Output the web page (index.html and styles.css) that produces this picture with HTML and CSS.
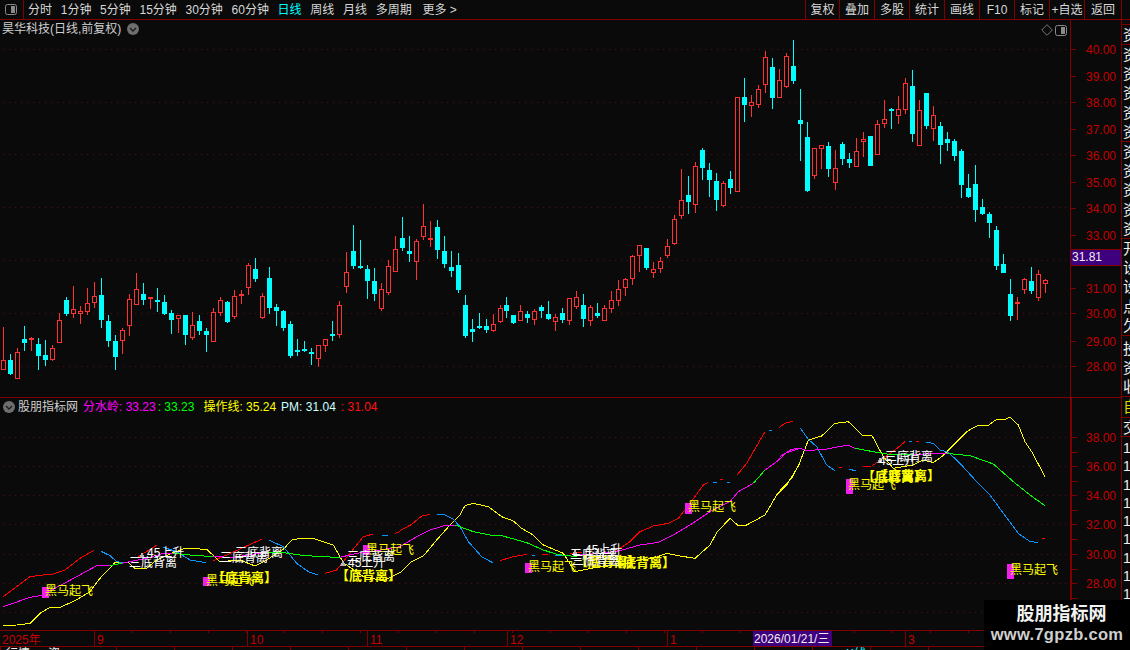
FILE: index.html
```html
<!DOCTYPE html>
<html lang="zh">
<head>
<meta charset="utf-8">
<title>昊华科技</title>
<link rel="stylesheet" href="styles.css">
</head>
<body>
<div class="app">
  <header class="toolbar">
    <div class="toggle"><svg class="panel-icon" viewBox="0 0 12 11"><rect x="0.5" y="0.5" width="11" height="10" rx="2" fill="none" stroke="#8a8a8a"/><rect x="6" y="2" width="4" height="7" fill="#8a8a8a"/></svg></div>
    <nav class="periods">
      <span>分时</span><span>1分钟</span><span>5分钟</span><span>15分钟</span><span>30分钟</span><span>60分钟</span><span class="active">日线</span><span>周线</span><span>月线</span><span>多周期</span><span>更多 &gt;</span>
    </nav>
    <div class="tools">
      <span>复权</span><span>叠加</span><span>多股</span><span>统计</span><span>画线</span><span>F10</span><span>标记</span><span>+自选</span><span>返回</span>
    </div>
  </header>
  <div class="workspace">
    <main class="charts">
      <section class="pane price-pane">
        <div class="plot">
          <svg id="candles" class="chart" viewBox="0 20 1070 377" shape-rendering="crispEdges"></svg>
          <div class="legend title-row">
            <span class="title">昊华科技(日线,前复权)</span>
            <svg class="chev" viewBox="0 0 12 12"><circle cx="6" cy="6" r="6" fill="#6e6e6e"/><path d="M3 5l3 3 3-3" fill="none" stroke="#1c1c1c" stroke-width="1.4"/></svg>
          </div>
          <div class="corner-icons">
            <svg class="diamond" viewBox="0 0 12 12"><path d="M6 .7L11.3 6 6 11.3.7 6z" fill="none" stroke="#777"/></svg>
            <svg class="panel-icon" viewBox="0 0 12 11"><rect x="0.5" y="0.5" width="11" height="10" rx="2" fill="none" stroke="#8a8a8a"/><rect x="6" y="2" width="4" height="7" fill="#8a8a8a"/></svg>
          </div>
        </div>
        <div class="axis" id="price-axis"><span class="last-price">31.81</span></div>
      </section>
      <section class="pane ind-pane">
        <div class="plot">
          <svg id="indicator" class="chart" viewBox="0 398 1070 232" shape-rendering="crispEdges"></svg>
          <div class="legend ind-legend">
            <svg class="chev" viewBox="0 0 12 12"><circle cx="6" cy="6" r="6" fill="#6e6e6e"/><path d="M3 5l3 3 3-3" fill="none" stroke="#1c1c1c" stroke-width="1.4"/></svg>
            <span class="title">股朋指标网</span>
            <span class="magenta">分水岭: 33.23</span>
            <span class="green">: 33.23</span>
            <span class="yellow">操作线: 35.24</span>
            <span class="pale">PM: 31.04</span>
            <span class="red">: 31.04</span>
          </div>
          <div id="signals"></div>
        </div>
        <div class="axis axis-thick" id="ind-axis"></div>
      </section>
      <div class="time-axis" id="time-axis"><span class="date-box">2026/01/21/三</span></div>
      <div class="tabs"><span class="tab-a">行情</span><span class="tab-b">资</span><span class="tab-c">K线</span></div>
    </main>
    <aside class="side">
      <div class="side-gap"></div>
      <div class="side-group one">资</div>
      <div class="side-group">资<br>资<br>资<br>资<br>资</div>
      <div class="side-group">资<br>资<br>资<br>资<br>资</div>
      <div class="side-group">开<br>设<br>设<br>点<br>欠</div>
      <div class="side-group three">投<br>资<br>收</div>
      <div class="side-group auto">自</div>
      <div class="side-group trade">交</div>
      <div class="side-nums"><span>1</span><span>1</span><span>1</span><span>1</span><span>1</span><span>1</span><span>1</span><span>1</span><span>1</span></div>
    </aside>
  </div>
  <div class="watermark"><strong>股朋指标网</strong><em>www.7gpzb.com</em></div>
</div>
<script src="chart.js"></script>
</body>
</html>
```
FILE: styles.css
```css
* { box-sizing: border-box; }
html, body { margin: 0; height: 100%; background: #0a0a0a; overflow: hidden; }
body { font: 12px/1 "Liberation Sans", "Noto Sans CJK SC", sans-serif; color: #d8d8d8; }
.app { position: relative; width: 1130px; height: 650px; display: flex; flex-direction: column; }

.toolbar { height: 20px; flex: none; display: flex; align-items: stretch; border-bottom: 1px solid #800000; padding-right: 8px; }
.toggle { width: 24px; border-right: 1px solid #800000; display: flex; align-items: center; justify-content: center; padding-right: 1px; }
.panel-icon { width: 12px; height: 11px; display: block; }
.periods { display: flex; align-items: center; gap: 8.7px; padding-left: 4px; flex: 1; }
.periods .active { color: #00ffff; }
.periods span:last-child { margin-left: 2px; }
.tools { display: flex; }
.tools span { width: 35px; display: flex; align-items: center; justify-content: center; border-right: 1px solid #800000; }
.tools span:first-child { border-left: 1px solid #800000; }
.tools span:last-child { width: 37px; }

.workspace { flex: 1; display: flex; min-height: 0; }
.charts { width: 1121px; flex: none; display: flex; flex-direction: column; }
.pane { display: flex; }
.price-pane { height: 377px; }
.ind-pane { height: 233px; border-top: 1px solid #800000; }
.plot { position: relative; width: 1070px; flex: none; }
.chart { display: block; width: 1070px; height: 100%; }

.legend { position: absolute; display: flex; align-items: center; white-space: nowrap; }
.title-row { left: 2px; top: 3px; gap: 6px; }
.ind-legend { left: 3px; top: 3px; gap: 5px; }
.ind-legend .title { margin: 0 0 0 -2px; width: 60px; }
.ind-legend .green { margin-left: -3px; }
.ind-legend .yellow { margin-left: 4px; }
.title { color: #cfcfcf; }
.chev { width: 12px; height: 12px; display: block; }
.magenta { color: #ff00ff; }
.green { color: #00ff00; }
.yellow { color: #ffff00; }
.pale { color: #ccffff; }
.red { color: #ff1010; }
.corner-icons { position: absolute; right: 3px; top: 4px; display: flex; gap: 2px; align-items: center; }
.diamond { width: 12px; height: 12px; display: block; }

.axis { position: relative; width: 51px; flex: none; border-left: 1px solid #800000; color: #c40000; }
.axis-thick { border-left-width: 2px; }
.tick { position: absolute; left: 0; width: 5px; height: 1px; background: #800000; }
.axis-label { position: absolute; left: 15px; }
.axis-thick .axis-label { left: 14px; }
.last-price { position: absolute; left: 0; top: 229px; width: 50px; height: 17px; background: #3f007f; color: #eee; line-height: 15px; padding-left: 1px; z-index: 1; border-top: 1px solid #800000; border-bottom: 1px solid #800000; }

.signal { position: absolute; white-space: nowrap; font-size: 12px; line-height: 12px; }
.signal.horse, .signal.bracket { color: #ffff00; }
.signal.bracket { font-weight: 700; font-size: 13px; }
.signal.rise { color: #fff; }

.time-axis { position: relative; height: 17px; border-top: 1px solid #800000; border-bottom: 1px solid #800000; flex: none; color: #c40000; }
.time-label { position: absolute; top: 0; height: 15px; padding: 3px 0 0 2px; border-left: 1px solid #800000; white-space: nowrap; }
.time-label.first { border-left: 0; }
.time-tick { position: absolute; top: 0; width: 1px; height: 2px; background: #800000; }
.date-box { position: absolute; left: 753px; top: 0; width: 79px; height: 15px; background: #3f007f; color: #eee; padding: 2px 0 0 1px; white-space: nowrap; z-index: 1; }
.tabs { flex: 1; min-height: 0; overflow: hidden; position: relative; background: repeating-linear-gradient(90deg, #800000 0 1px, transparent 1px 58px); }
.tab-a, .tab-b, .tab-c { position: absolute; top: 1px; color: #f0f0f0; }
.tab-a { left: 6px; }
.tab-b { left: 48px; }
.tab-c { left: 846px; color: #00ffff; }

.side { flex: 1; min-width: 0; overflow: hidden; border-left: 1px solid #800000; color: #f0f0f0; font-size: 15px; line-height: 19.2px; }
.side-gap { height: 5px; border-bottom: 1px solid #800000; }
.side-group { height: 97px; border-bottom: 1px solid #800000; overflow: hidden; padding-left: 1px; white-space: nowrap; }
.side-group.one { height: 20px; }
.side-group.three { height: 61px; padding-top: 3px; }
.side-group.auto { height: 21px; color: #d8d800; border-bottom: 1px solid #800000; }
.side-group.trade { height: 19px; }
.side-nums { display: flex; flex-direction: column; padding: 2px 0 0 1px; line-height: 18.3px; font-size: 14px; }

.watermark { position: absolute; right: 0; bottom: 0; width: 146px; height: 50px; background: #000; display: flex; flex-direction: column; align-items: center; z-index: 2; padding-top: 4px; }
.watermark strong { font-size: 18px; line-height: 20px; color: #f2f2f2; margin-left: 9px; }
.watermark em { font-style: normal; font-weight: 700; font-size: 16.5px; line-height: 20px; letter-spacing: .3px; color: #cfcfcf; }
```
FILE: chart.js
```js
var NS = "http://www.w3.org/2000/svg";
function el(parent, name, attrs) {
  var e = document.createElementNS(NS, name);
  for (var k in attrs) e.setAttribute(k, attrs[k]);
  parent.appendChild(e);
  return e;
}
function div(parent, cls, text, top, left) {
  var d = document.createElement("span");
  d.className = cls;
  if (text) d.textContent = text;
  if (top !== undefined) d.style.top = top + "px";
  if (left !== undefined) d.style.left = left + "px";
  parent.appendChild(d);
  return d;
}

/* candle data: colour, wick top, body top, body bottom, wick bottom (3x crop coordinates) */
var groups = [
  [260, "R200,300,330,330 C282,300,342,345 R265,277,356,356 C198,237,249,273 R232,234,240,273 C234,252,288,330 C240,285,300,318 R255,265,299,302 R160,181,248,248 C111,120,162,168 R78,148,161,174 R138,154,161,192 R84,130,155,165 R66,109,128,144 C54,105,180,204 C165,183,243,261 C225,243,291,330 R204,211,242,282 R102,118,197,228 R39,88,134,135 C69,102,120,135 R111,112,117,147 C84,120,126,156 C105,126,162,165 C150,159,180,222 R165,166,176,219 C165,165,225,255 R156,196,233,240 C165,183,213,225 C204,213,225,276 R144,157,245,245 R111,121,158,168 C123,126,186,189 R90,109,170,177 R90,103,109,132 R9,15,83,105 C-6,27,57,66 R99,109,173,177 C21,54,144,162 C132,141,153,198 C150,153,204,213 C183,192,288,294 C237,270,276,288 C243,267,270,276 C264,276,282,315 R255,256,296,321 R237,238,257,276 C183,222,225,243 R123,136,224,234 R-24,37,80,99"],
  [190, "C105,183,228,237 C150,228,232,237 C225,237,273,327 C234,273,312,333 R279,297,357,363 R210,229,308,315 R138,178,245,245 C81,144,174,183 C138,183,192,216 R148,154,215,270 R42,109,140,150 R93,144,149,171 C90,111,180,207 C138,183,222,234 C183,231,243,261 C189,225,300,309 C315,345,438,444 C387,417,426,456 C369,408,411,417 C387,408,420,429 R372,403,423,426 R345,355,396,399 C321,345,363,384 C375,375,400,402 R345,364,392,393 C363,372,384,399 R357,364,389,405 C345,351,363,384 C333,372,387,390 R372,380,395,423 C354,369,390,399 R324,325,392,405 R303,322,351,357 C312,345,387,411 R345,352,392,408 C339,369,378,384 R345,355,392,393 R303,331,357,369 R270,298,333,348 R264,268,293,318 R195,199,266,285 R165,166,197,246 C174,174,234,240 R216,238,250,264 R201,214,236,249 R147,169,197,204 R75,88,161,165"],
  [30, "R417,511,557,567 C438,495,516,552 R396,408,524,549 C354,360,414,450 C399,420,450,501 C429,453,510,543 R453,459,528,530 C423,447,474,492 R202,202,485,485 C144,201,225,276 R195,217,227,261 R165,178,224,234 R63,82,164,189 C84,111,204,237 R117,151,204,204 R69,79,170,174 C30,108,153,162 C177,270,282,393 C276,321,483,486 R354,355,437,447 R345,346,356,417 C336,348,417,441 R360,415,458,480 C336,342,387,405 C369,387,399,414 R324,364,410,410 R306,328,335,381 C318,318,408,408 R270,283,374,374 R210,268,281,294 C234,237,243,297 R198,238,257,282 R144,160,239,252 C120,168,312,336 R210,241,347,347 C189,189,288,297 R228,256,296,333 C276,288,345,402 C306,327,339,363 C327,333,378,393 C357,363,465,504 C432,474,501,504 C405,462,540,576 C507,531,552,555"],
  [180, "C96,102,129,174 C138,150,258,270 C222,252,279,279 C297,342,408,423 R351,366,369,420 R294,297,330,342 C261,303,333,342 R270,283,354,363 R297,301,312,339"]
];

var candles = [];
groups.forEach(function (g) {
  g[1].split(" ").forEach(function (s) {
    var n = s.slice(1).split(",").map(function (v) { return g[0] + Number(v) / 3; });
    candles.push({ red: s[0] === "R", w0: n[0], b0: n[1], b1: n[2], w1: n[3] });
  });
});

var price = document.getElementById("candles");
var gridColor = "#5a0f0f";
[49.5, 102.5, 154.5, 207.5, 260.5, 313.5, 366.5].forEach(function (y) {
  el(price, "line", { x1: 3, x2: 1070, y1: y, y2: y, stroke: gridColor, "stroke-dasharray": "1 5" });
});
candles.forEach(function (c, i) {
  var x = Math.round(3 + i * 6.993);
  var col = c.red ? "#ff3232" : "#00ffff";
  var b0 = Math.round(c.b0), b1 = Math.round(c.b1);
  el(price, "rect", { x: x, y: Math.round(c.w0), width: 1, height: Math.max(1, Math.round(c.w1) - Math.round(c.w0)), fill: col });
  if (c.red) {
    el(price, "rect", { x: x - 2, y: b0, width: 5, height: Math.max(2, b1 - b0), fill: "#ff3232" });
    if (b1 - b0 > 2) el(price, "rect", { x: x - 1, y: b0 + 1, width: 3, height: b1 - b0 - 2, fill: "#0a0a0a" });
  } else {
    el(price, "rect", { x: x - 2, y: b0, width: 5, height: Math.max(2, b1 - b0), fill: col });
  }
});

/* axis labels */
var priceAxis = document.getElementById("price-axis");
[[40, 49], [39, 76], [38, 102], [37, 129], [36, 155], [35, 182], [34, 208], [33, 235], [31, 288], [30, 313], [29, 341], [28, 366]].forEach(function (p) {
  div(priceAxis, "tick", "", p[1] - 20);
  div(priceAxis, "axis-label", p[0].toFixed(2), p[1] - 25);
});
var indAxis = document.getElementById("ind-axis");
[[38, 437], [36, 466], [34, 495], [32, 524], [30, 554], [28, 583]].forEach(function (p) {
  div(indAxis, "tick", "", p[1] - 398);
  div(indAxis, "tick", "", p[1] - 398 + 15);
  div(indAxis, "axis-label", p[0].toFixed(2), p[1] - 403);
});

/* indicator lines: [crop, colour, points in 3x crop coordinates] */
var RED = "#ff0000", MAG = "#ff00ff", GRN = "#00ff00", YEL = "#ffff00", BLU = "#0a96ff";
var crops = { a: 0, b: 400, c: 780 };
var lines = [
  ["a", YEL, "10,708 50,705 90,700 120,670 150,652 180,652 225,632 270,605 300,565 345,518 385,518 405,535 440,535 470,510 515,490 555,475 620,478 660,515 720,510 765,528 800,510 850,478 875,450 905,444 935,444 1000,465 1030,518 1090,560 1150,572 1200,548"],
  ["b", YEL, "0,548 35,515 70,498 110,450 150,405 180,375 195,347 220,340 265,350 305,380 340,393 365,415 395,432 430,465 490,490 525,545 600,530 660,525 720,510 760,505 800,490 840,498 885,505 930,465 950,428 990,385 1015,407 1040,405 1095,375 1130,315 1160,285 1200,220"],
  ["c", YEL, "0,300 35,265 60,215 85,150 125,138 165,100 205,95 250,138 275,135 310,200 340,235 400,225 430,210 460,218 485,200 520,165 560,125 590,108 625,106 650,88 670,90 690,82 715,105 735,155 755,185 795,260"],
  ["a", RED, "10,620 50,590 90,560 130,555 160,552 195,540 240,505 282,481"],
  ["a", RED, "415,500 470,466"],
  ["a", RED, "640,512 680,495 735,470 785,448"],
  ["a", RED, "975,550 1010,540 1050,490 1090,440 1120,432"],
  ["a", RED, "1185,430 1200,425"],
  ["b", RED, "0,422 35,403 65,378 90,373"],
  ["b", RED, "300,512 340,500 380,493"],
  ["b", RED, "425,494 445,494"],
  ["b", RED, "510,490 545,488"],
  ["b", RED, "660,475 690,455 720,425 760,408 805,400 835,385 870,340 910,285 925,277"],
  ["b", RED, "960,268 970,268"],
  ["b", RED, "1012,254 1040,220 1095,125"],
  ["b", RED, "1138,112 1160,97 1180,95"],
  ["c", RED, "0,110 15,100 38,94"],
  ["c", RED, "176,232 186,232"],
  ["c", RED, "248,229 275,228 310,205 345,180 375,155"],
  ["c", RED, "408,155 418,155"],
  ["c", RED, "785,445 795,445"],
  ["a", BLU, "303,484 330,497 350,515 370,518"],
  ["a", BLU, "490,472 530,485 570,510 617,518"],
  ["a", BLU, "808,451 850,470 890,520 925,545 953,555"],
  ["a", BLU, "1145,436 1165,436"],
  ["b", BLU, "112,373 135,375 160,388 180,410 205,455 245,500 278,518"],
  ["b", BLU, "395,496 405,496"],
  ["b", BLU, "465,497 485,497"],
  ["b", BLU, "940,277 950,277"],
  ["b", BLU, "980,277 990,277"],
  ["b", BLU, "1107,121 1115,121"],
  ["c", BLU, "60,113 85,148 110,170 140,225 165,242"],
  ["c", BLU, "207,238 228,242"],
  ["c", BLU, "387,155 397,155"],
  ["c", BLU, "437,157 460,160 480,180 505,187 540,220 590,275 630,315 670,370 715,430 750,455 775,457"],
  ["a", MAG, "10,650 90,622 130,615 170,592 230,560 290,527 330,525"],
  ["a", GRN, "330,527 365,520"],
  ["a", MAG, "365,520 440,505 490,490 520,490"],
  ["a", GRN, "520,490 570,495 640,500"],
  ["a", MAG, "640,500 700,502 780,490 800,488"],
  ["a", GRN, "800,488 850,488 900,495 960,500 1020,502"],
  ["a", MAG, "1020,502 1070,490 1130,482 1200,470"],
  ["b", MAG, "0,470 50,440 90,420 130,408 165,405"],
  ["b", GRN, "165,405 220,425 270,435 305,437 380,458 430,480 470,493 530,500"],
  ["b", MAG, "530,495 600,490 660,482 720,465 775,457 820,435 870,405 930,365 990,335 1015,305 1060,280"],
  ["b", GRN, "1060,280 1095,240"],
  ["b", MAG, "1095,240 1130,215 1160,188 1200,175"],
  ["c", MAG, "0,200 35,178 60,175 80,182 140,177 205,165 225,175"],
  ["c", GRN, "225,175 290,187 340,195 400,193"],
  ["c", MAG, "400,193 500,190"],
  ["c", GRN, "500,190 570,197 640,222 700,275 750,315 795,347"]
];
var ind = document.getElementById("indicator");
[437, 466, 495, 524, 554, 583, 612].forEach(function (y) {
  el(ind, "line", { x1: 3, x2: 1070, y1: y + 0.5, y2: y + 0.5, stroke: gridColor, "stroke-dasharray": "1 5" });
});
lines.forEach(function (l) {
  var pts = l[2].split(" ").map(function (p) {
    var v = p.split(",");
    return (crops[l[0]] + v[0] / 3) + "," + (390 + v[1] / 3);
  }).join(" ");
  el(ind, "polyline", { points: pts, fill: "none", stroke: l[1], "stroke-width": 1 });
});

/* signals */
var horses = [[42, 587, 11, 45, 585], [203, 577, 9, 206, 575], [363, 545, 10, 366, 544], [525, 563, 10, 528, 561], [685, 503, 11, 688, 501], [846, 479, 15, 848, 479], [1007, 564, 15, 1010, 564]];
horses.forEach(function (h) {
  el(ind, "rect", { x: h[0], y: h[1], width: 7, height: h[2], fill: "#f01df0" });
});
[[142, 555], [343, 563], [575, 552], [880, 460]].forEach(function (t) {
  el(ind, "polygon", { points: (t[0] - 3) + "," + (t[1] + 3) + " " + t[0] + "," + (t[1] - 3) + " " + (t[0] + 3) + "," + (t[1] + 3), fill: "#b4b4b4" });
});
var signals = document.getElementById("signals");
function sig(cls, text, x, cy) { div(signals, "signal " + cls, text, cy - 6 - 398, x); }
horses.forEach(function (h) { sig("horse", "黑马起飞", h[3], h[4] + 6); });
[[217, 578], [341, 576], [580, 562], [615, 563], [867, 477], [880, 476]].forEach(function (b) { sig("bracket", "【底背离】", b[0] - 5, b[1]); });
[[129, 563], [220, 558], [235, 553], [347, 557], [570, 555], [572, 561], [885, 457]].forEach(function (b) { sig("rise", "三底背离", b[0], b[1]); });
[[147, 553], [348, 563], [585, 550], [879, 461]].forEach(function (b) { sig("rise", "45上升", b[0], b[1]); });

/* time axis */
var axis = document.getElementById("time-axis");
[[0, "2025年", "first"], [94, "9"], [247, "10"], [367, "11"], [507, "12"], [667, "1"], [905, "3"]].forEach(function (t) {
  div(axis, "time-label " + (t[2] || ""), t[1], undefined, t[0]);
});
for (var tx = 132; tx < 980; tx += 38) div(axis, "time-tick", "", undefined, tx);
```
